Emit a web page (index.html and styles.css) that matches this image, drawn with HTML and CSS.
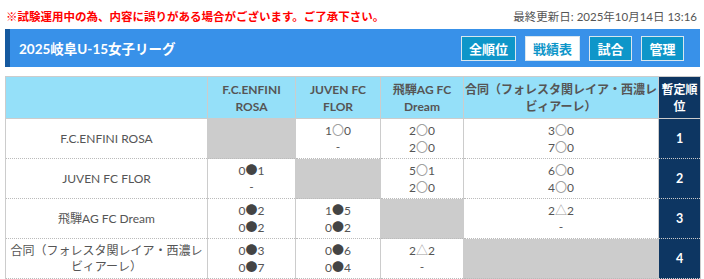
FILE: index.html
```html
<!DOCTYPE html>
<html lang="ja">
<head>
<meta charset="utf-8">
<link rel="stylesheet" href="styles.css">
</head>
<body>
<div class="page">
  <div class="topline">
    <span class="notice">※試験運用中の為、内容に誤りがある場合がございます。ご了承下さい。</span>
    <span class="updated">最終更新日: 2025年10月14日 13:16</span>
  </div>
  <div class="titlebar">
    <h1 class="title">2025岐阜U-15女子リーグ</h1>
    <nav class="tabs">
      <a class="btn w3">全順位</a>
      <a class="btn w3 active">戦績表</a>
      <a class="btn w2">試合</a>
      <a class="btn w2">管理</a>
    </nav>
  </div>
  <table class="grid">
    <colgroup>
      <col class="c-team"><col class="c-a"><col class="c-b"><col class="c-c"><col class="c-d"><col class="c-rank">
    </colgroup>
    <thead>
      <tr>
        <th></th>
        <th>F.C.ENFINI<br>ROSA</th>
        <th>JUVEN FC<br>FLOR</th>
        <th>飛騨AG FC<br>Dream</th>
        <th class="wide">合同（フォレスタ関レイア・西濃レビィアーレ）</th>
        <th class="rank">暫定順位</th>
      </tr>
    </thead>
    <tbody>
      <tr>
        <td class="team">F.C.ENFINI ROSA</td>
        <td class="self"></td>
        <td>1<span class="win">〇</span>0<br>-</td>
        <td>2<span class="win">〇</span>0<br>2<span class="win">〇</span>0</td>
        <td>3<span class="win">〇</span>0<br>7<span class="win">〇</span>0</td>
        <td class="rank">1</td>
      </tr>
      <tr>
        <td class="team">JUVEN FC FLOR</td>
        <td>0<span class="lose">●</span>1<br>-</td>
        <td class="self"></td>
        <td>5<span class="win">〇</span>1<br>2<span class="win">〇</span>0</td>
        <td>6<span class="win">〇</span>0<br>4<span class="win">〇</span>0</td>
        <td class="rank">2</td>
      </tr>
      <tr>
        <td class="team">飛騨AG FC Dream</td>
        <td>0<span class="lose">●</span>2<br>0<span class="lose">●</span>2</td>
        <td>1<span class="lose">●</span>5<br>0<span class="lose">●</span>2</td>
        <td class="self"></td>
        <td>2<span class="draw">△</span>2<br>-</td>
        <td class="rank">3</td>
      </tr>
      <tr>
        <td class="team">合同（フォレスタ関レイア・西濃レビィアーレ）</td>
        <td>0<span class="lose">●</span>3<br>0<span class="lose">●</span>7</td>
        <td>0<span class="lose">●</span>6<br>0<span class="lose">●</span>4</td>
        <td>2<span class="draw">△</span>2<br>-</td>
        <td class="self"></td>
        <td class="rank">4</td>
      </tr>
    </tbody>
  </table>
</div>
</body>
</html>
```
FILE: styles.css
```css
* { box-sizing: border-box; }
html, body { margin: 0; padding: 0; background: #fff; }
body {
  font-family: Lato, "Noto Sans CJK JP", sans-serif;
  color: #555;
}
.page { padding: 0 4px 0 5px; }
.topline {
  display: flex;
  justify-content: space-between;
  align-items: center;
  height: 29px;
  padding: 2px 3px 0 1px;
}
.notice {
  color: #f00;
  font-weight: bold;
  font-size: 11.5px;
}
.updated {
  font-size: 11.5px;
  color: #555;
}
.titlebar {
  display: flex;
  justify-content: space-between;
  align-items: center;
  height: 38px;
  background: #3891e9;
  border-left: 5px solid #15599f;
  padding: 0 16px 0 9px;
}
.title {
  margin: 0;
  color: #fff;
  font-size: 13.5px;
  font-weight: bold;
}
.tabs { display: flex; gap: 9px; }
.btn {
  display: flex;
  align-items: center;
  justify-content: center;
  height: 25px;
  background: #0e96c9;
  border: 1px solid #d8e6ee;
  color: #fff;
  font-weight: bold;
  font-size: 13px;
  text-decoration: none;
}
.btn.w3 { width: 55px; }
.btn.w2 { width: 43px; }
.btn.active { background: #fff; color: #0e96c9; }
.grid {
  margin-top: 9px;
  width: 695px;
  table-layout: fixed;
  border-collapse: collapse;
  font-size: 12px;
}
.c-team { width: 202px; }
.c-a { width: 88px; }
.c-b { width: 85px; }
.c-c { width: 83px; }
.c-d { width: 195px; }
.c-rank { width: 42px; }
.grid th {
  background: #95e0f9;
  height: 42px;
  font-weight: bold;
  color: #555;
  line-height: 17px;
  border: 1px solid #ccc;
  padding: 0 2px;
}
.grid th.wide { padding: 0; }
.grid td {
  height: 40px;
  text-align: center;
  line-height: 16px;
  border-left: 1px solid #ccc;
  border-right: 1px solid #ccc;
  border-bottom: 1px dotted #bbb;
  padding: 0 2px;
  color: #555;
}
.grid td.self { background: #ccc; }
.grid .rank {
  background: #0d3662;
  color: #fff;
  font-weight: bold;
  border-color: #ccc;
  padding: 0 1px;
}
.grid th.rank { font-size: 12px; }
.grid td.rank { font-size: 12.5px; }
.win, .lose, .draw { font-family: "Noto Sans CJK JP", sans-serif; }
.win { color: #a0a0a0; }
.lose { color: #444; }
.draw { color: #a0a0a0; }
```
